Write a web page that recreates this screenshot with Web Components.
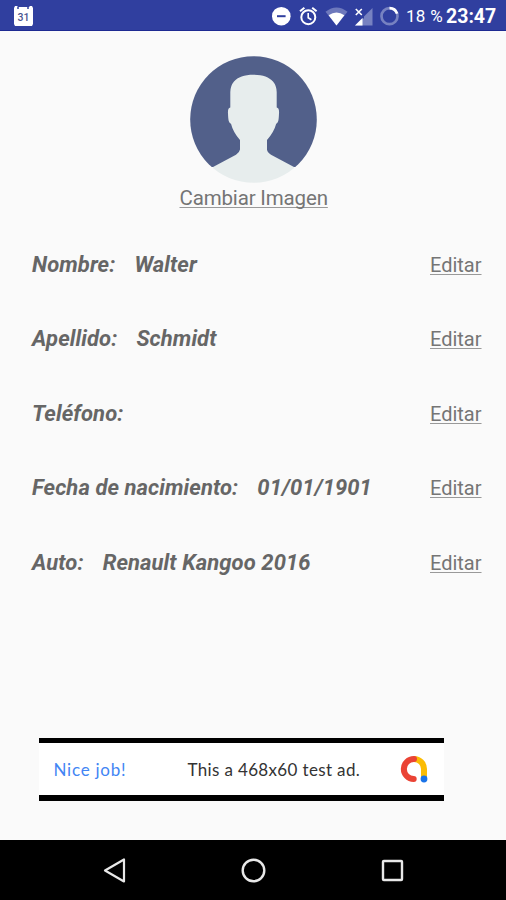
<!DOCTYPE html>
<html lang="es">
<head>
<meta charset="utf-8">
<title>Perfil</title>
<style>
    body {
        margin: 0;
        background: #fafafa;
        font-family: Roboto, "Liberation Sans", sans-serif;
    }
</style>
</head>
<body>
<profile-screen></profile-screen>

<template id="status-bar">
<style>
    :host {
        display: flex;
        flex: none;
        box-sizing: border-box;
        height: 31px;
        padding: 2px 10px 0 13px;
        align-items: center;
        justify-content: space-between;
        background: #303f9f;
        border-bottom: 1px solid #1d2a92;
        color: #fff;
    }
    svg { display: block; }
    .right { display: flex; align-items: center; }
    .battery { width: 37px; margin-left: 5px; font-size: 17px; letter-spacing: .3px; white-space: nowrap; }
    .clock { width: 50px; margin-left: 3px; font-size: 19.5px; font-weight: 700; white-space: nowrap; }
</style>
<svg width="21" height="22" viewBox="0 0 21 22">
    <path fill="#fff" d="M2 1h2l1 1h11l1-1h2l1 2v16l-1 2H2l-1-2V3z"/>
    <path stroke="#303f9f" stroke-width="1.5" d="M5 2v2M15 2v2"/>
    <text x="10.4" y="16" text-anchor="middle" font-size="10.5" font-weight="500" fill="#4a5490">31</text>
</svg>
<div class="right">
    <svg width="137" height="26" viewBox="264 2.500 137 26">
        <circle cx="281.3" cy="15.7" r="9.3" fill="#fff"/>
        <path stroke="#303f9f" stroke-width="2" d="M277 15.7h8.6"/>
        <g fill="none" stroke="#fff" stroke-width="2">
            <circle cx="308.3" cy="16.7" r="7"/>
            <path d="M300 10.8l4.4-3.6M316.6 10.8l-4.4-3.6"/>
            <path stroke-width="1.6" d="M308.2 12.5v4.7l3.2 2"/>
        </g>
        <path fill="#6d78bc" d="M325.500 11.300Q336.500 2.800 347.500 11.300L336.500 25z"/>
        <path fill="#fff" d="M328.600 14.800Q336.500 9 344.400 14.800L336.500 25z"/>
        <path fill="#7782c1" d="M372.500 7.500V25H355z"/>
        <path stroke="#303f9f" stroke-width="4" d="M362 10v8"/>
        <path fill="#fff" d="M362.500 17.500V25H355z"/>
        <path stroke="#fff" stroke-width="1.6" d="M355.800 8.500l6 6M361.800 8.500l-6 6"/>
        <circle cx="389.500" cy="15.700" r="8" fill="none" stroke="#7782c1" stroke-width="2.700"/>
        <path fill="none" stroke="#fff" stroke-width="2.700" d="M389.500 7.700a8 8 0 0 1 7.600 5.500"/>
    </svg>
    <span class="battery">18 %</span>
    <span class="clock">23:47</span>
</div>
</template>

<template id="profile-avatar">
<style>
    :host { display: flex; flex-direction: column; align-items: center; padding-top: 25px; height: 171.5px; }
    svg { display: block; }
</style>
<svg width="127" height="127" viewBox="0 0 127 127">
    <clipPath id="round"><circle cx="63.500" cy="63.500" r="63.300"/></clipPath>
    <g clip-path="url(#round)">
        <path fill="#52608a" d="M0 0h127v111H0z"/>
        <path fill="#e7eded" d="M63.500 18.700C73 18.700 79 21 83 25.500Q86.500 29.500 86.700 36V51.500Q89.500 52 89 57.500C88.800 63 88.500 67 86.200 67.700Q84 76 77 84V93.500Q77.300 96.500 81 98.700L104 111V127H23V111L46 98.700Q49.500 96.500 50 93.500V84Q43 76 41 67.700C38.500 67 38.200 63 38 57.500Q37.500 52 40.300 51.500V36Q40.500 29.500 44 25.500C48 21 54 18.700 63.500 18.700z"/>
    </g>
</svg>
<text-link style="--size: 20.5px; --width: 147px; --spacing: -.16px"><slot></slot></text-link>
</template>

<template id="text-link">
<style>
    :host { display: block; width: var(--width, 52px); }
    a {
        display: block;
        font-size: var(--size, 20px);
        letter-spacing: var(--spacing, 0);
        line-height: 30px;
        color: #757575;
        white-space: nowrap;
        text-decoration: underline;
        text-decoration-color: #999;
        text-decoration-thickness: 1px;
        text-underline-offset: 2px;
        text-decoration-skip-ink: none;
        cursor: pointer;
    }
</style>
<a><slot></slot></a>
</template>

<template id="profile-field">
<style>
    :host {
        display: flex;
        height: 74.5px;
        padding: 0 24px 0 32px;
        align-items: center;
        justify-content: space-between;
    }
    .text {
        display: flex;
        gap: 19px;
        font: italic 700 22px/30px Roboto, "Liberation Sans", sans-serif;
        letter-spacing: .08px;
        color: #666;
        white-space: nowrap;
    }
</style>
<div class="text"><span class="label"></span><slot></slot></div>
<text-link>Editar</text-link>
</template>

<template id="ad-banner">
<style>
    :host {
        display: flex;
        box-sizing: border-box;
        width: 405px;
        height: 63px;
        margin: auto 0 39px 38.5px;
        padding: 0 16px 0 15px;
        align-items: center;
        background: #fff;
        border-top: 5px solid #000;
        border-bottom: 6px solid #000;
        font-family: Lato, Roboto, sans-serif;
        font-size: 17px;
        letter-spacing: .35px;
        color: #333;
        white-space: nowrap;
    }
    .call { width: 134px; letter-spacing: .75px; color: #4285f4; }
    .copy { flex: 1; }
    svg { display: block; }
</style>
<span class="call">Nice job!</span>
<span class="copy"><slot></slot></span>
<svg width="28" height="28" viewBox="0 0 28 28" fill="none" stroke-width="6">
    <path stroke="#fbbc04" d="M14 4a10 10 0 0 1 10 10v8"/>
    <path stroke="#ea4335" stroke-linecap="round" d="M14 4a10 10 0 0 0-.3 20"/>
    <circle cx="24" cy="24" r="3.400" fill="#1a73e8"/>
</svg>
</template>

<template id="nav-bar">
<style>
    :host {
        display: flex;
        flex: none;
        box-sizing: border-box;
        height: 60px;
        padding: 0 99px;
        align-items: center;
        justify-content: space-between;
        background: #000;
    }
    svg { display: block; }
</style>
<svg width="30" height="30" viewBox="0 0 30 30"><path d="M25 4.500v22L6 15.500z" fill="none" stroke="#e8e8e8" stroke-width="2.200" stroke-linejoin="round"/></svg>
<svg width="30" height="30" viewBox="0 0 30 30"><circle cx="15.500" cy="15.500" r="10.800" fill="none" stroke="#e8e8e8" stroke-width="2.400"/></svg>
<svg width="30" height="30" viewBox="0 0 30 30"><rect x="6" y="6" width="19" height="19" rx=".8" fill="none" stroke="#e8e8e8" stroke-width="2.400"/></svg>
</template>

<template id="profile-screen">
<style>
    :host { display: flex; flex-direction: column; width: 506px; height: 900px; overflow: hidden; }
    main { display: flex; flex: 1; flex-direction: column; min-height: 0; }
</style>
<status-bar></status-bar>
<main>
    <profile-avatar>Cambiar Imagen</profile-avatar>
    <profile-field label="Nombre:">Walter</profile-field>
    <profile-field label="Apellido:">Schmidt</profile-field>
    <profile-field label="Teléfono:"></profile-field>
    <profile-field label="Fecha de nacimiento:">01/01/1901</profile-field>
    <profile-field label="Auto:">Renault Kangoo 2016</profile-field>
    <ad-banner>This a 468x60 test ad.</ad-banner>
</main>
<nav-bar></nav-bar>
</template>

<script>
class TemplateElement extends HTMLElement {
    constructor() {
        super();
        const root = this.attachShadow({ mode: 'open' });
        root.appendChild(document.getElementById(this.localName).content.cloneNode(true));
    }

    $(selector) {
        return this.shadowRoot.querySelector(selector);
    }
}

customElements.define('text-link', class TextLink extends TemplateElement {});
customElements.define('status-bar', class StatusBar extends TemplateElement {});
customElements.define('profile-avatar', class ProfileAvatar extends TemplateElement {});

customElements.define('profile-field', class ProfileField extends TemplateElement {
    static get observedAttributes() { return ['label']; }

    attributeChangedCallback(attr, oldValue, newValue) {
        this.$('.label').textContent = newValue;
    }
});

customElements.define('ad-banner', class AdBanner extends TemplateElement {});
customElements.define('nav-bar', class NavBar extends TemplateElement {});
customElements.define('profile-screen', class ProfileScreen extends TemplateElement {});
</script>
</body>
</html>
